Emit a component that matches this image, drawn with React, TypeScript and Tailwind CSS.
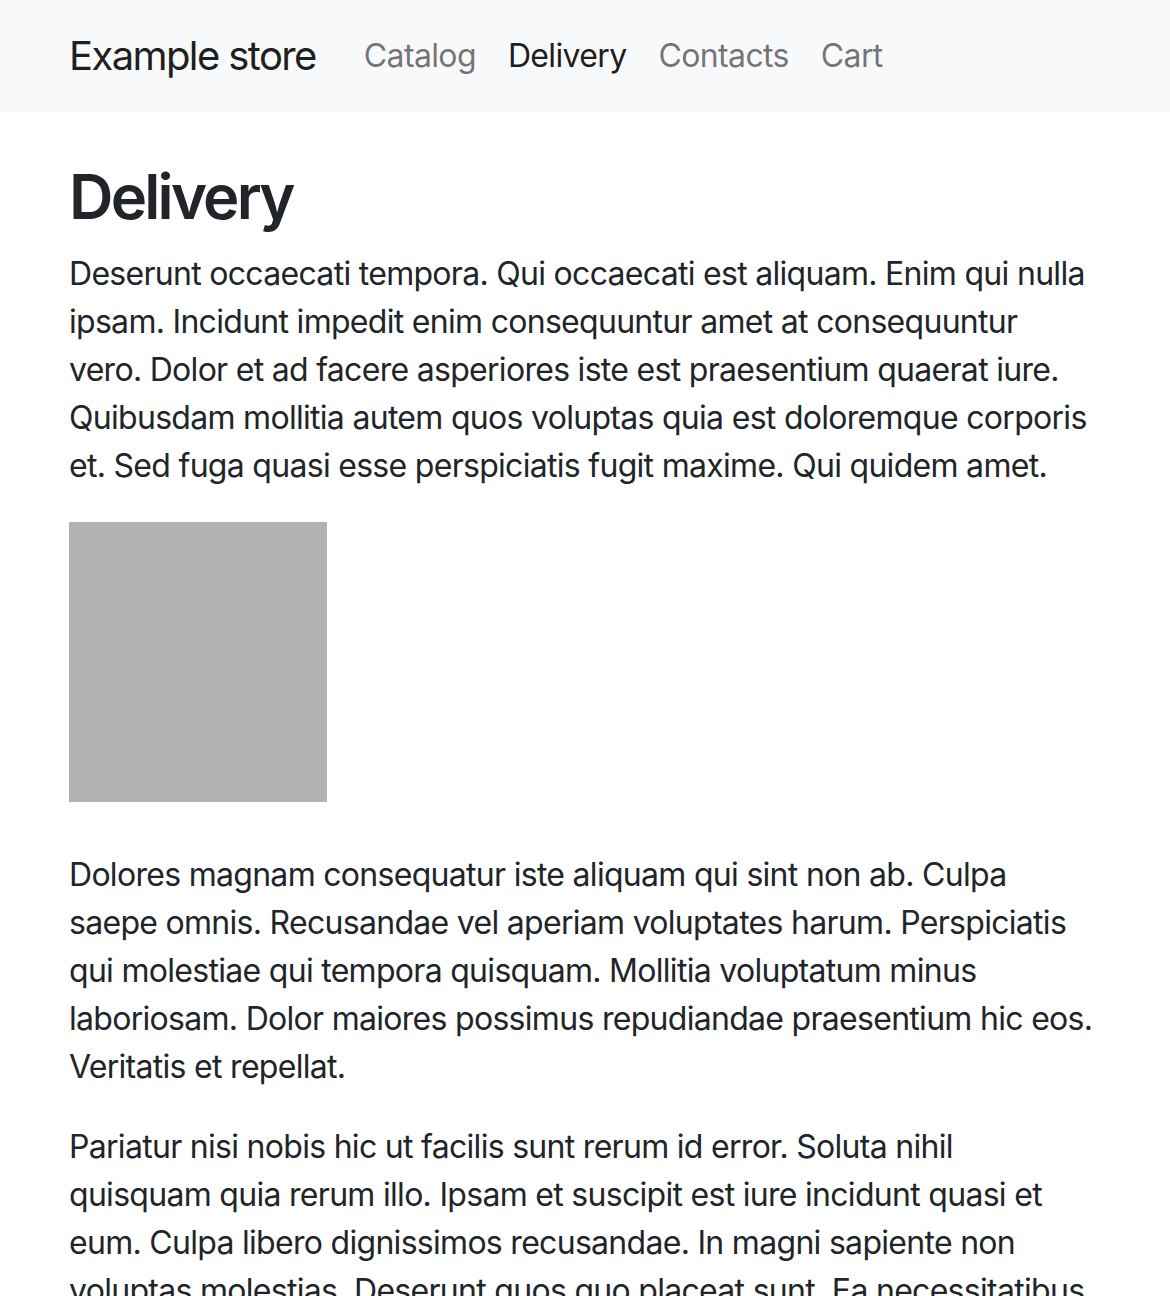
import React from 'react';

const links = [
  { label: 'Catalog', active: false },
  { label: 'Delivery', active: true },
  { label: 'Contacts', active: false },
  { label: 'Cart', active: false },
];

// lines are kept as in the original wrap
const intro = [
  'Deserunt occaecati tempora. Qui occaecati est aliquam. Enim qui nulla',
  'ipsam. Incidunt impedit enim consequuntur amet at consequuntur',
  'vero. Dolor et ad facere asperiores iste est praesentium quaerat iure.',
  'Quibusdam mollitia autem quos voluptas quia est doloremque corporis',
  'et. Sed fuga quasi esse perspiciatis fugit maxime. Qui quidem amet.',
];

const paragraphs = [
  [
    'Dolores magnam consequatur iste aliquam qui sint non ab. Culpa',
    'saepe omnis. Recusandae vel aperiam voluptates harum. Perspiciatis',
    'qui molestiae qui tempora quisquam. Mollitia voluptatum minus',
    'laboriosam. Dolor maiores possimus repudiandae praesentium hic eos.',
    'Veritatis et repellat.',
  ],
  [
    'Pariatur nisi nobis hic ut facilis sunt rerum id error. Soluta nihil',
    'quisquam quia rerum illo. Ipsam et suscipit est iure incidunt quasi et',
    'eum. Culpa libero dignissimos recusandae. In magni sapiente non',
    'voluptas molestias. Deserunt quos quo placeat sunt. Ea necessitatibus',
    'voluptatem dolorum quia. Sit est ut quis.',
  ],
];

function Lines({ lines, className }: { lines: string[]; className?: string }) {
  return (
    <p className={`whitespace-nowrap tracking-[-0.022em] ${className ?? ''}`}>
      {lines.map((l, i) => (
        <React.Fragment key={i}>
          {l}
          {i < lines.length - 1 && <br />}
        </React.Fragment>
      ))}
    </p>
  );
}

export default function App() {
  return (
    <div className="min-h-screen bg-white text-[#212529] font-['Inter',sans-serif] text-[32px] leading-[48px]">
      <nav className="bg-[#f8f9fa] h-[112px]">
        <div className="mx-auto w-[1080px] px-6 h-full flex items-center">
          <a className="text-[40px] leading-[60px] text-black/90 mr-8 tracking-[-0.04em]">Example store</a>
          <ul className="flex items-center">
            {links.map((l) => (
              <li key={l.label}>
                <a
                  className={`block px-4 py-4 tracking-[-0.02em] ${
                    l.active ? 'text-black/90' : 'text-black/55'
                  }`}
                >
                  {l.label}
                </a>
              </li>
            ))}
          </ul>
        </div>
      </nav>
      <main className="mx-auto w-[1080px] px-6 pt-12">
        <h1 className="text-[61.5px] leading-[73.8px] font-semibold mb-4 tracking-[-0.045em]">Delivery</h1>
        <Lines lines={intro} className="mb-8" />
        <div className="w-[258px] h-[280px] bg-[#b2b2b2] mb-[49px]" />
        {paragraphs.map((p, i) => (
          <Lines key={i} lines={p} className="mb-8" />
        ))}
      </main>
    </div>
  );
}
